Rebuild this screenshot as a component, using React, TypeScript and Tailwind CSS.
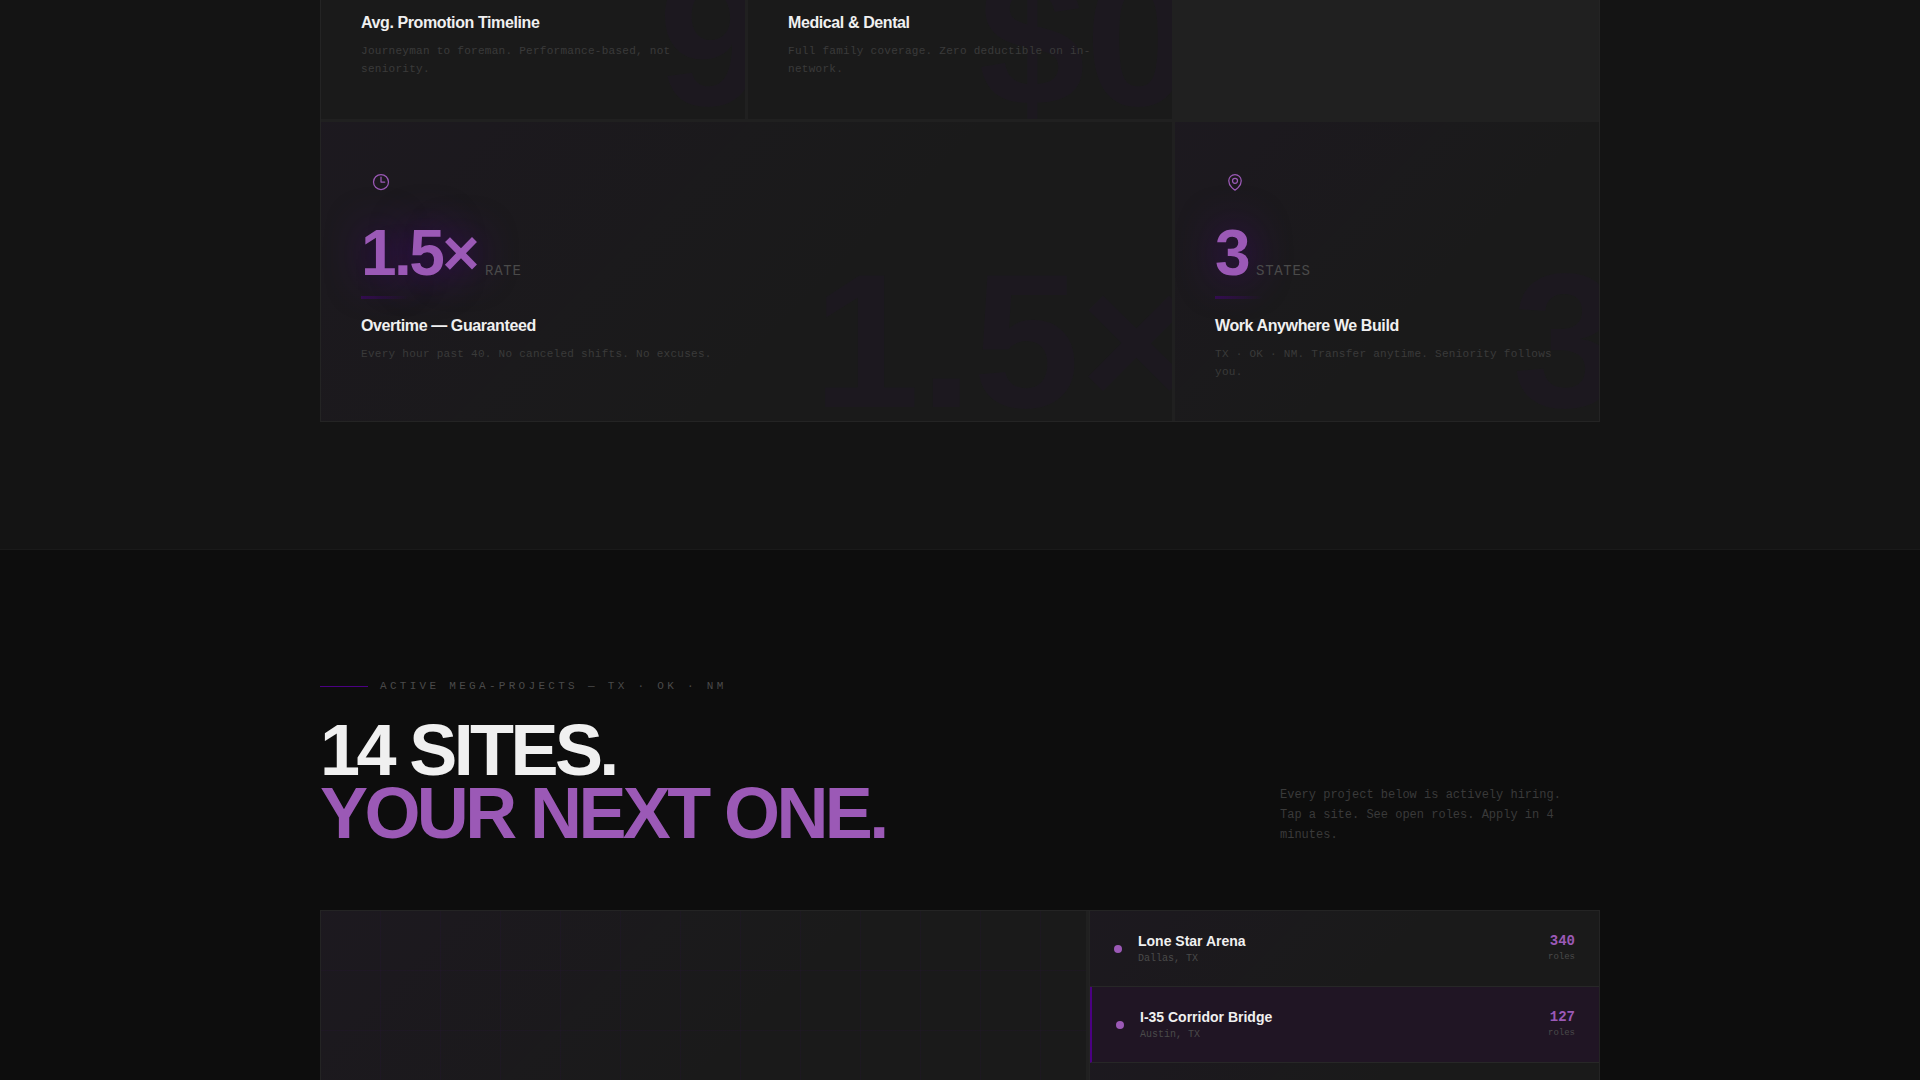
import type { ReactNode } from "react";

const projects = [
  { name: "Lone Star Arena", city: "Dallas, TX", roles: 340, active: false },
  { name: "I-35 Corridor Bridge", city: "Austin, TX", roles: 127, active: true },
];

const cardBg = "bg-[#1a1a1a] bg-[linear-gradient(135deg,rgba(75,0,130,0.05)_0%,transparent_60%)]";

function Icon({ children }: { children: ReactNode }) {
  return (
    <svg
      width="20"
      height="20"
      viewBox="0 0 24 24"
      fill="none"
      stroke="currentColor"
      strokeWidth="1.5"
      strokeLinecap="round"
      strokeLinejoin="round"
      aria-hidden="true"
    >
      {children}
    </svg>
  );
}

function Ghost({ children }: { children: ReactNode }) {
  return (
    <span
      aria-hidden="true"
      className="pointer-events-none absolute -right-5 -bottom-4 select-none text-[192px] font-bold leading-none text-[rgba(75,0,130,0.05)]"
    >
      {children}
    </span>
  );
}

function CardText({ title, text }: { title: string; text: string }) {
  return (
    <>
      <h3 className="mb-2 text-base font-bold leading-[22px] tracking-tight text-[#f0f0f0]">{title}</h3>
      <p className="font-['Liberation_Mono',monospace] text-[11px] leading-[18px] tracking-wide text-[#3a3a3a]">{text}</p>
    </>
  );
}

type StatProps = {
  icon: ReactNode;
  value: string;
  unit: string;
  title: string;
  text: string;
  className?: string;
};

function StatCard({ icon, value, unit, title, text, className = "" }: StatProps) {
  return (
    <article className={`relative overflow-hidden p-10 ${cardBg} ${className}`}>
      <Ghost>{value}</Ghost>
      <div className="relative">
        <div className="mb-5 flex h-10 w-10 items-center justify-center text-[#9b59b6]">{icon}</div>
        <div className="mb-3 flex items-baseline gap-2">
          <span className="text-[64px] font-bold leading-[62px] tracking-[-0.04em] text-[#9b59b6] [text-shadow:0_0_40px_rgba(75,0,130,0.9)]">
            {value}
          </span>
          <span className="font-['Liberation_Mono',monospace] text-sm leading-none tracking-wider text-[#4a4a4a]">{unit}</span>
        </div>
        <div className="mb-4 h-[3px] w-12 bg-linear-to-r from-[#4b0082]/50 to-transparent" />
        <CardText title={title} text={text} />
      </div>
    </article>
  );
}

export default function App() {
  return (
    <main className="flex h-screen flex-col overflow-hidden bg-[#0d0d0d] font-['Liberation_Sans',Arial,sans-serif]">
      <section className="border-b border-[#1a1a1a] bg-[#141414] pb-[127px]">
        <div className="mx-auto grid max-w-[1280px] grid-cols-3 gap-[3px] border-x border-b border-[#242424] bg-[#202020]">
          <article className="relative overflow-hidden bg-[#1a1a1a] px-10 pt-3 pb-[41px]">
            <Ghost>9</Ghost>
            <div className="relative">
              <CardText title="Avg. Promotion Timeline" text="Journeyman to foreman. Performance-based, not seniority." />
            </div>
          </article>
          <article className="relative overflow-hidden bg-[#1a1a1a] px-10 pt-3 pb-[41px]">
            <Ghost>$0</Ghost>
            <div className="relative">
              <CardText title="Medical &amp; Dental" text="Full family coverage. Zero deductible on in-network." />
            </div>
          </article>
          <div />
          <StatCard
            className="col-span-2"
            icon={
              <Icon>
                <path d="M12 6v6h4.5m4.5 0a9 9 0 1 1-18 0 9 9 0 0 1 18 0Z" />
              </Icon>
            }
            value="1.5×"
            unit="RATE"
            title="Overtime — Guaranteed"
            text="Every hour past 40. No canceled shifts. No excuses."
          />
          <StatCard
            icon={
              <Icon>
                <path d="M15 10.5a3 3 0 1 1-6 0 3 3 0 0 1 6 0Z" />
                <path d="M19.5 10.5c0 7.142-7.5 11.25-7.5 11.25S4.5 17.642 4.5 10.5a7.5 7.5 0 1 1 15 0Z" />
              </Icon>
            }
            value="3"
            unit="STATES"
            title="Work Anywhere We Build"
            text="TX · OK · NM. Transfer anytime. Seniority follows you."
          />
        </div>
      </section>

      <section className="flex min-h-0 flex-1 flex-col pt-32">
        <div className="mx-auto flex w-full max-w-[1280px] flex-1 flex-col">
          <header className="mb-[65px] flex items-end justify-between">
            <div>
              <div className="mb-[25px] flex items-center gap-3">
                <span className="h-px w-12 bg-[#4b0082]" />
                <span className="font-['Liberation_Mono',monospace] text-[11px] leading-4 tracking-[0.3em] text-[#4a4a4a]">
                  ACTIVE MEGA-PROJECTS — TX · OK · NM
                </span>
              </div>
              <h2 className="text-[72px] font-bold leading-[63px] tracking-tighter text-[#f0f0f0]">
                14 SITES.
                <br />
                <span className="text-[#9b59b6]">YOUR NEXT ONE.</span>
              </h2>
            </div>
            <p className="w-80 pr-6 font-['Liberation_Mono',monospace] text-xs leading-5 text-[#3a3a3a]">
              Every project below is actively hiring. Tap a site. See open roles. Apply in 4 minutes.
            </p>
          </header>

          <div className="grid flex-1 grid-cols-[3fr_2fr] gap-[3px] border border-b-0 border-[#242424] bg-[#202020]">
            <div className={cardBg}>
              <div className="h-full bg-[repeating-linear-gradient(180deg,transparent_0_59px,rgba(75,0,130,0.06)_59px_60px),repeating-linear-gradient(90deg,transparent_0_59px,rgba(75,0,130,0.06)_59px_60px)]" />
            </div>
            <div className="flex flex-col border-l border-[#242424] bg-[#1a1a1a]">
              {projects.map((p) => (
                <button
                  key={p.name}
                  className={`flex items-center gap-4 border-b border-[#272727] px-6 py-5 text-left ${
                    p.active ? "border-l-2 border-l-[#4b0082] bg-[#201524]" : cardBg
                  }`}
                >
                  <span className="h-2 w-2 rounded-full bg-[#9b59b6]" />
                  <span className="flex-1">
                    <span className="block text-sm font-bold leading-5 text-[#f0f0f0]">{p.name}</span>
                    <span className="block font-['Liberation_Mono',monospace] text-[10px] leading-[15px] text-[#4a4a4a]">{p.city}</span>
                  </span>
                  <span className="pb-0.5 text-right font-['Liberation_Mono',monospace]">
                    <span className="block text-sm font-bold leading-5 text-[#9b59b6]">{p.roles}</span>
                    <span className="block text-[9px] leading-[13px] text-[#4a4a4a]">roles</span>
                  </span>
                </button>
              ))}
              <div className={`flex-1 ${cardBg}`} />
            </div>
          </div>
        </div>
      </section>
    </main>
  );
}
